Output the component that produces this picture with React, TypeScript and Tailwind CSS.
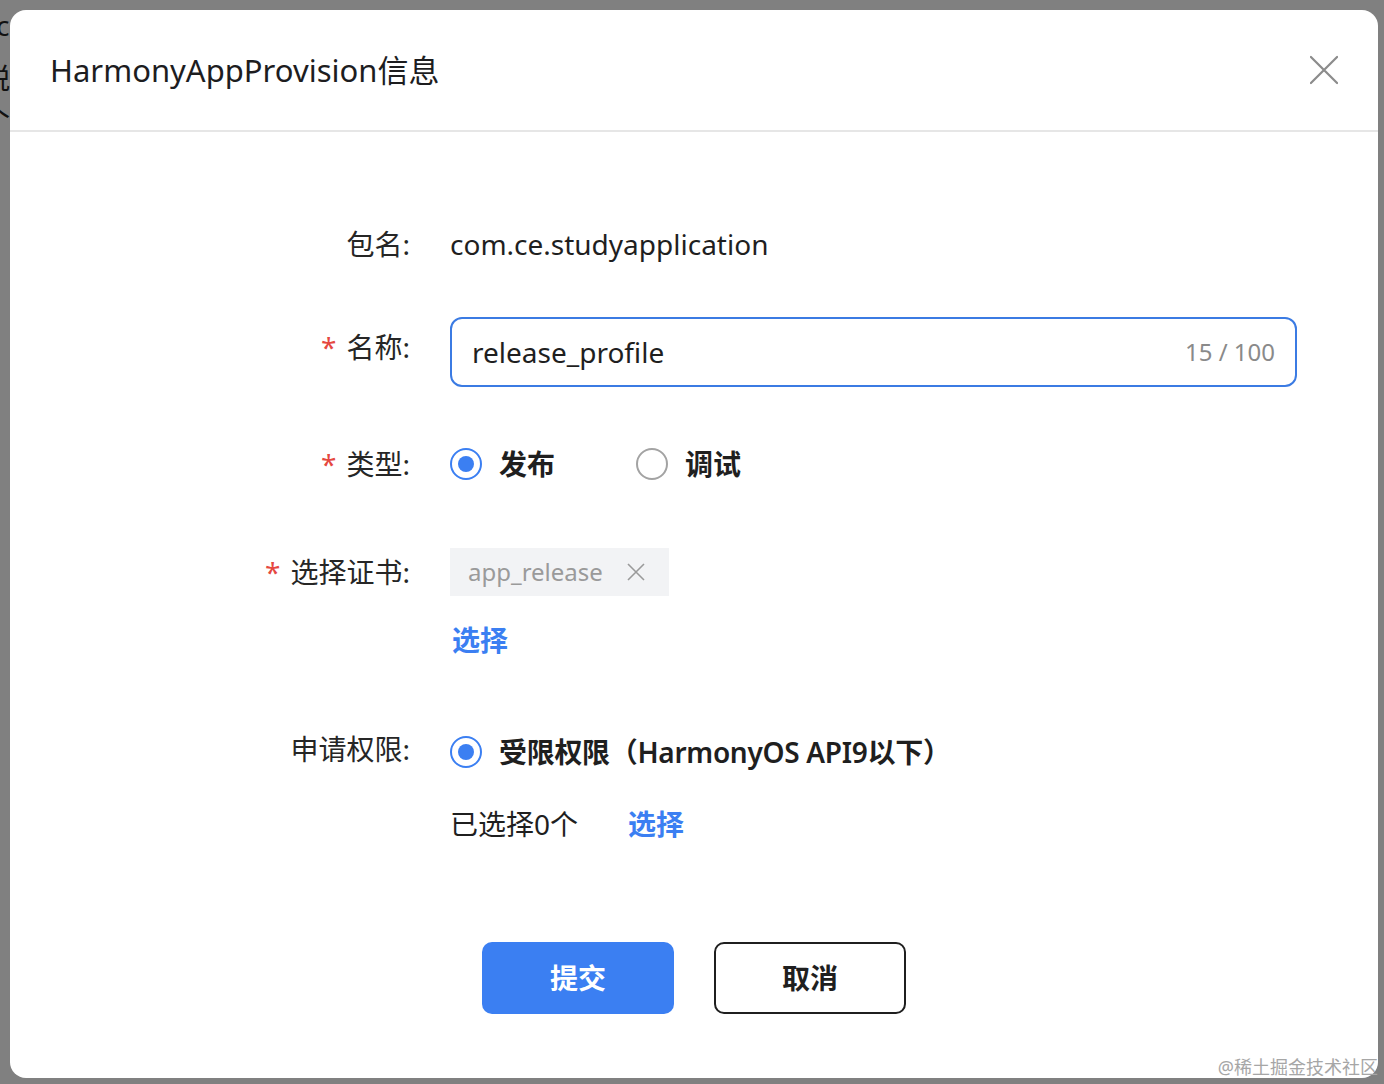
import React, { useState } from 'react';

const font = { fontFamily: '"Noto Sans", "Noto Sans CJK SC", sans-serif' };

function Radio({ checked }: { checked: boolean }) {
  return (
    <span
      className={`flex h-[32px] w-[32px] shrink-0 items-center justify-center rounded-full border-2 ${
        checked ? 'border-[#3b7ff2]' : 'border-[#a3a3a3]'
      }`}
    >
      {checked && <span className="h-[16px] w-[16px] rounded-full bg-[#3b7ff2]" />}
    </span>
  );
}

function Label({ text, required }: { text: string; required?: boolean }) {
  return (
    <div className="flex w-[402px] shrink-0 justify-end pr-[2px] text-[28px] leading-[40px] text-[#262626]">
      {required && <span className="mr-[10px] text-[#e5483f]">*</span>}
      <span>{text}:</span>
    </div>
  );
}

export default function App() {
  const [type, setType] = useState<'release' | 'debug'>('release');
  const [name, setName] = useState('release_profile');

  return (
    <div className="relative h-[1084px] w-[1384px] overflow-hidden bg-[#808080]" style={font}>
      {/* page underneath the mask */}
      <div className="flex flex-col pt-[6px] text-[28px] leading-[38px] text-[#111]">
        <span className="-ml-[4px]">c</span>
        <span className="-ml-[18px] mt-[15px]">锐</span>
        <span className="-ml-[18px] mt-[2px]">个</span>
      </div>
      <div className="absolute right-[-14px] top-[228px] text-[28px] text-[#111]">1</div>

      {/* dialog */}
      <div className="absolute left-[10px] top-[10px] flex h-[1068px] w-[1368px] flex-col rounded-[16px] bg-white">
        <div className="flex h-[122px] shrink-0 items-center justify-between border-b-2 border-[#e6e6e6] pl-[40px] pr-[40px]">
          <h1 className="text-[31px] font-normal text-[#1d1d1f]">HarmonyAppProvision信息</h1>
          <button className="flex h-[28px] w-[28px] items-center justify-center">
            <svg width="30" height="30" viewBox="0 0 30 30" fill="none" stroke="#8c8c8c" strokeWidth="2.4" strokeLinecap="round">
              <path d="M1 1L29 29M29 1L1 29" />
            </svg>
          </button>
        </div>

        <div className="flex flex-col pt-[92px]">
          {/* package */}
          <div className="flex items-start gap-[38px]">
            <Label text="包名" />
            <span className="text-[28px] leading-[40px] text-[#1f1f1f]">com.ce.studyapplication</span>
          </div>

          {/* name */}
          <div className="mt-[53px] flex items-start gap-[38px]">
            <div className="pt-[10px]">
              <Label text="名称" required />
            </div>
            <div className="flex h-[70px] w-[847px] items-center rounded-[12px] border-2 border-[#3b7be3] pl-[20px] pr-[20px]">
              <input
                value={name}
                onChange={e => setName(e.target.value)}
                className="min-w-0 flex-1 bg-transparent text-[28px] text-[#1f1f1f] outline-none"
              />
              <span className="text-[24px] text-[#8a8a8a]">{name.length} / 100</span>
            </div>
          </div>

          {/* type */}
          <div className="mt-[57px] flex items-start gap-[38px]">
            <Label text="类型" required />
            <div className="flex h-[40px] items-center">
              <button onClick={() => setType('release')} className="flex items-center gap-[17px]">
                <Radio checked={type === 'release'} />
                <span className="text-[28px] font-bold text-[#1f1f1f]">发布</span>
              </button>
              <button onClick={() => setType('debug')} className="ml-[81px] flex items-center gap-[17px]">
                <Radio checked={type === 'debug'} />
                <span className="text-[28px] font-bold text-[#1f1f1f]">调试</span>
              </button>
            </div>
          </div>

          {/* certificate */}
          <div className="mt-[64px] flex items-start gap-[38px]">
            <div className="pt-[4px]">
              <Label text="选择证书" required />
            </div>
            <div className="flex flex-col items-start">
              <div className="flex h-[48px] items-center gap-[24px] bg-[#f2f3f5] pl-[18px] pr-[24px]">
                <span className="text-[24px] text-[#9a9a9a]">app_release</span>
                <svg width="18" height="18" viewBox="0 0 18 18" fill="none" stroke="#9a9a9a" strokeWidth="1.6">
                  <path d="M1 1L17 17M17 1L1 17" />
                </svg>
              </div>
              <button className="ml-[2px] mt-[24px] text-[28px] font-bold leading-[40px] text-[#3b7ff2]">选择</button>
            </div>
          </div>

          {/* permissions */}
          <div className="mt-[72px] flex items-start gap-[38px]">
            <div className="-mt-[3px]">
              <Label text="申请权限" />
            </div>
            <div className="flex flex-col items-start">
              <div className="flex h-[40px] items-center gap-[17px]">
                <Radio checked />
                <span className="text-[28px] font-semibold tracking-[-0.3px] text-[#1f1f1f]">受限权限（HarmonyOS API9以下）</span>
              </div>
              <div className="mt-[32px] flex h-[40px] items-center">
                <span className="text-[28px] text-[#1f1f1f]">已选择0个</span>
                <button className="ml-[50px] text-[28px] font-bold text-[#3b7ff2]">选择</button>
              </div>
            </div>
          </div>

          {/* actions */}
          <div className="mt-[98px] flex justify-center gap-[40px]">
            <button className="flex h-[72px] w-[192px] items-center justify-center rounded-[10px] bg-[#3b7ff2] text-[28px] font-bold text-white">
              提交
            </button>
            <button className="flex h-[72px] w-[192px] items-center justify-center rounded-[10px] border-2 border-[#1f1f1f] bg-white text-[28px] font-bold text-[#1f1f1f]">
              取消
            </button>
          </div>
        </div>
      </div>

      {/* watermark */}
      <div className="absolute bottom-[5px] right-[6px] text-[18px] leading-[24px] text-[#a6a6a6]">
        @稀土掘金技术社区
      </div>
    </div>
  );
}
